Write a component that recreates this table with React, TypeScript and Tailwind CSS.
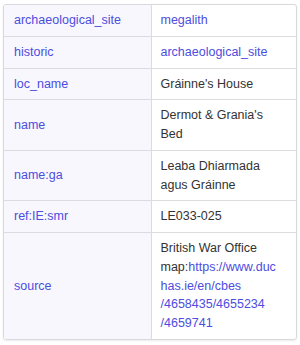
const link = 'text-[#4d4de0]';

const rows: { k: string; v: React.ReactNode; link?: boolean }[] = [
  { k: 'archaeological_site', v: 'megalith', link: true },
  { k: 'historic', v: 'archaeological_site', link: true },
  { k: 'loc_name', v: "Gráinne's House" },
  { k: 'name', v: "Dermot & Grania's Bed" },
  { k: 'name:ga', v: 'Leaba Dhiarmada agus Gráinne' },
  { k: 'ref:IE:smr', v: 'LE033-025' },
  {
    k: 'source',
    v: (
      <>
        British War Office
        <br />
        map:<a className={link}>https://www.duc</a>
        <br />
        <a className={link}>has.ie/en/cbes</a>
        <br />
        <a className={link}>/4658435/4655234</a>
        <br />
        <a className={link}>/4659741</a>
      </>
    ),
  },
];

export default function App() {
  return (
    <div className="bg-white w-[300px] h-[345px] pt-[4px] pl-[3px] font-['Liberation_Sans',Arial,sans-serif] text-[12.5px] leading-[18.75px]">
      <div className="w-[294px] border border-[#d9d9dd] rounded-[3px] overflow-hidden shadow-[0_1px_2px_rgba(0,0,0,0.08)]">
        <table className="w-full border-collapse table-fixed">
          <tbody>
            {rows.map((r, i) => (
              <tr key={r.k} className={i > 0 ? 'border-t border-[#dcdce0]' : ''}>
                {/* key */}
                <td className="w-[147px] bg-[#f7f7fd] border-r border-[#dcdce0] px-[10px] py-[6px] align-middle text-[#4d4de0]">
                  {r.k}
                </td>
                {/* value */}
                <td className={`pl-[9px] pr-[10px] py-[6px] align-middle ${r.link ? 'text-[#4d4de0]' : 'text-[#333]'}`}>
                  {r.v}
                </td>
              </tr>
            ))}
          </tbody>
        </table>
      </div>
    </div>
  );
}
